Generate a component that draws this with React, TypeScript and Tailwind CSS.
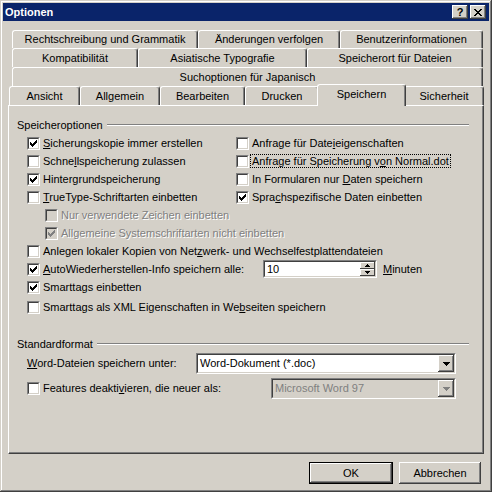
import React from 'react'

const CHECK = 'M6 0h1v1H6z M5 1h2v1H5z M0 2h1v1H0z M4 2h3v1H4z M0 3h2v1H0z M3 3h3v1H3z M0 4h5v1H0z M1 5h3v1H1z M2 6h1v1H2z'
const CLOSE = 'M0 0h2v1H0z M6 0h2v1H6z M1 1h2v1H1z M5 1h2v1H5z M2 2h4v1H2z M3 3h2v1H3z M2 4h4v1H2z M1 5h2v1H1z M5 5h2v1H5z M0 6h2v1H0z M6 6h2v1H6z'
const DOWN = 'M0 0h7v1H0z M1 1h5v1H1z M2 2h3v1H2z M3 3h1v1H3z'
const SPIN_UP = 'M2 0h1v1H2z M1 1h3v1H1z M0 2h5v1H0z'
const SPIN_DOWN = 'M0 0h5v1H0z M1 1h3v1H1z M2 2h1v1H2z'

function Box({ checked = false, disabled = false }: { checked?: boolean; disabled?: boolean }) {
  return (
    <span className="flex h-[13px] w-[13px] shrink-0 border border-t-[#808080] border-l-[#808080] border-r-white border-b-white">
      <span
        className={`flex flex-1 items-center justify-center border border-t-[#404040] border-l-[#404040] border-r-[#d4d0c8] border-b-[#d4d0c8] ${
          disabled ? 'bg-[#d4d0c8]' : 'bg-white'
        }`}
      >
        {checked && (
          <svg width="7" height="7" viewBox="0 0 7 7" shapeRendering="crispEdges">
            <path d={CHECK} fill={disabled ? '#808080' : '#000'} />
          </svg>
        )}
      </span>
    </span>
  )
}

function Check({
  checked,
  disabled,
  className = '',
  children,
}: {
  checked?: boolean
  disabled?: boolean
  className?: string
  children: React.ReactNode
}) {
  return (
    <div className={`flex h-[18px] items-center gap-[3px] whitespace-nowrap ${disabled ? 'text-[#808080]' : ''} ${className}`}>
      <Box checked={checked} disabled={disabled} />
      <span>{children}</span>
    </div>
  )
}

function Tab({ className = '', children }: { className?: string; children: React.ReactNode }) {
  return (
    <div
      className={`flex h-full shrink-0 items-center justify-center whitespace-nowrap rounded-t-[3px] border-t border-l border-r border-t-white border-l-white border-r-[#404040] shadow-[inset_-1px_0_#808080] ${className}`}
    >
      {children}
    </div>
  )
}

function GroupHead({ children }: { children: React.ReactNode }) {
  return (
    <div className="flex h-[14px] items-center pl-[8px] pr-[14px]">
      <span>{children}</span>
      <span className="ml-[4px] h-[2px] flex-1 border-t border-b border-t-[#808080] border-b-white" />
    </div>
  )
}

function Sunken({ className = '', children }: { className?: string; children: React.ReactNode }) {
  return (
    <div className={`flex border border-t-[#808080] border-l-[#808080] border-r-white border-b-white ${className}`}>
      <div className="flex flex-1 border border-t-[#404040] border-l-[#404040] border-r-[#d4d0c8] border-b-[#d4d0c8]">{children}</div>
    </div>
  )
}

function Combo({ value, disabled }: { value: string; disabled?: boolean }) {
  return (
    <Sunken className="h-[21px] w-full">
      <div className={`flex flex-1 items-center pl-[2px] ${disabled ? 'bg-[#d4d0c8] text-[#808080]' : 'bg-white'}`}>{value}</div>
      <div className={`flex w-[16px] items-center justify-center bg-[#d4d0c8] shadow-[inset_-1px_-1px_#404040,inset_1px_1px_#fff,inset_-2px_-2px_#808080] ${disabled ? 'bg-[#d4d0c8]' : ''}`}>
        <svg width="7" height="4" viewBox="0 0 7 4" shapeRendering="crispEdges">
          <path d={DOWN} fill={disabled ? '#808080' : '#000'} />
        </svg>
      </div>
    </Sunken>
  )
}

function Button({ def, children }: { def?: boolean; children: React.ReactNode }) {
  return (
    <div className={`flex h-[22px] items-center justify-center ${def ? 'w-[84px] border border-black' : 'w-[82px]'}`}>
      <div className="flex h-full w-full items-center justify-center shadow-[inset_-1px_-1px_#404040,inset_1px_1px_#fff,inset_-2px_-2px_#808080]">
        {children}
      </div>
    </div>
  )
}

export default function App() {
  return (
    <div className="flex h-[492px] w-[492px] flex-col bg-[#d4d0c8] p-[3px] font-[Liberation_Sans,Arial,sans-serif] text-[11px] leading-[13px] text-black shadow-[inset_-1px_-1px_#404040,inset_1px_1px_#d4d0c8,inset_-2px_-2px_#808080,inset_2px_2px_#fff]">
      {/* title bar */}
      <div className="flex h-[18px] shrink-0 items-center justify-between bg-[#0a246a] pl-[2px] pr-[3px]">
        <span className="font-bold text-white">Optionen</span>
        <div className="flex gap-[2px]">
          <div className="flex h-[14px] w-[16px] items-center justify-center bg-[#d4d0c8] font-bold shadow-[inset_-1px_-1px_#404040,inset_1px_1px_#fff,inset_-2px_-2px_#808080]">
            ?
          </div>
          <div className="flex h-[14px] w-[16px] items-center justify-center bg-[#d4d0c8] shadow-[inset_-1px_-1px_#404040,inset_1px_1px_#fff,inset_-2px_-2px_#808080]">
            <svg width="8" height="7" viewBox="0 0 8 7" shapeRendering="crispEdges">
              <path d={CLOSE} fill="#000" />
            </svg>
          </div>
        </div>
      </div>

      {/* tab rows */}
      <div className="mt-[9px] flex h-[18px] ml-[9px]">
        <Tab className="w-[186px]">Rechtschreibung und Grammatik</Tab>
        <Tab className="w-[142px]">Änderungen verfolgen</Tab>
        <Tab className="w-[143px]">Benutzerinformationen</Tab>
      </div>
      <div className="flex h-[19px] ml-[9px]">
        <Tab className="w-[126px]">Kompatibilität</Tab>
        <Tab className="w-[169px]">Asiatische Typografie</Tab>
        <Tab className="w-[176px]">Speicherort für Dateien</Tab>
      </div>
      <div className="flex h-[19px] ml-[9px]">
        <Tab className="w-[471px]">Suchoptionen für Japanisch</Tab>
      </div>
      <div className="flex h-[19px] ml-[6px] items-start">
        <Tab className="w-[71px]">Ansicht</Tab>
        <Tab className="w-[80px]">Allgemein</Tab>
        <Tab className="w-[85px]">Bearbeiten</Tab>
        <Tab className="w-[74px]">Drucken</Tab>
        <Tab className="relative z-10 -mx-[2px] -mt-[2px] !h-[22px] w-[89px] bg-[#d4d0c8] pb-[3px]">Speichern</Tab>
        <Tab className="w-[80px]">Sicherheit</Tab>
      </div>

      {/* panel */}
      <div className="mx-[5px] flex h-[349px] shrink-0 flex-col border border-t-white border-l-white border-r-[#404040] border-b-[#404040] pt-[12px] shadow-[inset_-1px_-1px_#808080]">
        <GroupHead>Speicheroptionen</GroupHead>
        <div className="mt-[2px] pl-[18px]">
          <div className="grid grid-cols-[209px_1fr]">
            <Check checked><u>S</u>icherungskopie immer erstellen</Check>
            <Check>Anfrage für Date<u>i</u>eigenschaften</Check>
            <Check>Schne<u>l</u>lspeicherung zulassen</Check>
            <div className="flex h-[18px] items-center gap-[3px] whitespace-nowrap">
              <Box />
              <span className="border border-dotted border-black px-[1px] leading-[12px] -ml-[2px]">
                Anfrage für Speicherung v<u>o</u>n Normal.dot
              </span>
            </div>
            <Check checked>Hinter<u>g</u>rundspeicherung</Check>
            <Check>In Formularen nur <u>D</u>aten speichern</Check>
            <Check><u>T</u>rueType-Schriftarten einbetten</Check>
            <Check checked>Spra<u>c</u>hspezifische Daten einbetten</Check>
          </div>
          <Check disabled className="ml-[18px] [text-shadow:1px_1px_0_#fff]">Nur verwendete Zeichen einbetten</Check>
          <Check disabled checked className="ml-[18px] [text-shadow:1px_1px_0_#fff]">Allgemeine Systemschriftarten nicht einbetten</Check>
          <Check>Anlegen lokaler Kopien von Net<u>z</u>werk- und Wechselfestplattendateien</Check>
          <div className="flex h-[18px] items-center">
            <div className="w-[236px]">
              <Check checked><u>A</u>utoWiederherstellen-Info speichern alle:</Check>
            </div>
            <Sunken className="h-[18px] w-[114px]">
              <div className="flex flex-1 items-center bg-white pl-[2px]">10</div>
              <div className="flex w-[15px] flex-col bg-white">
                <div className="flex flex-1 items-center justify-center bg-[#d4d0c8] shadow-[inset_-1px_-1px_#404040,inset_1px_1px_#fff]">
                  <svg width="5" height="3" viewBox="0 0 5 3" shapeRendering="crispEdges">
                    <path d={SPIN_UP} fill="#000" />
                  </svg>
                </div>
                <div className="flex flex-1 items-center justify-center bg-[#d4d0c8] shadow-[inset_-1px_-1px_#404040,inset_1px_1px_#fff]">
                  <svg width="5" height="3" viewBox="0 0 5 3" shapeRendering="crispEdges">
                    <path d={SPIN_DOWN} fill="#000" />
                  </svg>
                </div>
              </div>
            </Sunken>
            <span className="ml-[6px]"><u>M</u>inuten</span>
          </div>
          <Check checked>Smartta<u>g</u>s einbetten</Check>
          <Check className="mt-[2px]">Smarttags als XML Eigenschaften in We<u>b</u>seiten speichern</Check>
        </div>

        <div className="mt-[21px]">
          <GroupHead>Standardformat</GroupHead>
        </div>
        <div className="mt-[2px] flex h-[21px] items-center pl-[18px] pr-[27px]">
          <span className="w-[169px]"><u>W</u>ord-Dateien speichern unter:</span>
          <div className="flex-1">
            <Combo value="Word-Dokument (*.doc)" />
          </div>
        </div>
        <div className="mt-[4px] flex h-[21px] items-center pl-[18px] pr-[27px]">
          <div className="w-[244px]">
            <Check>Features deakti<u>v</u>ieren, die neuer als:</Check>
          </div>
          <div className="flex-1">
            <Combo value="Microsoft Word 97" disabled />
          </div>
        </div>
      </div>

      {/* buttons */}
      <div className="mt-[8px] flex justify-end gap-[6px] pr-[8px]">
        <Button def>OK</Button>
        <Button>Abbrechen</Button>
      </div>
    </div>
  )
}
